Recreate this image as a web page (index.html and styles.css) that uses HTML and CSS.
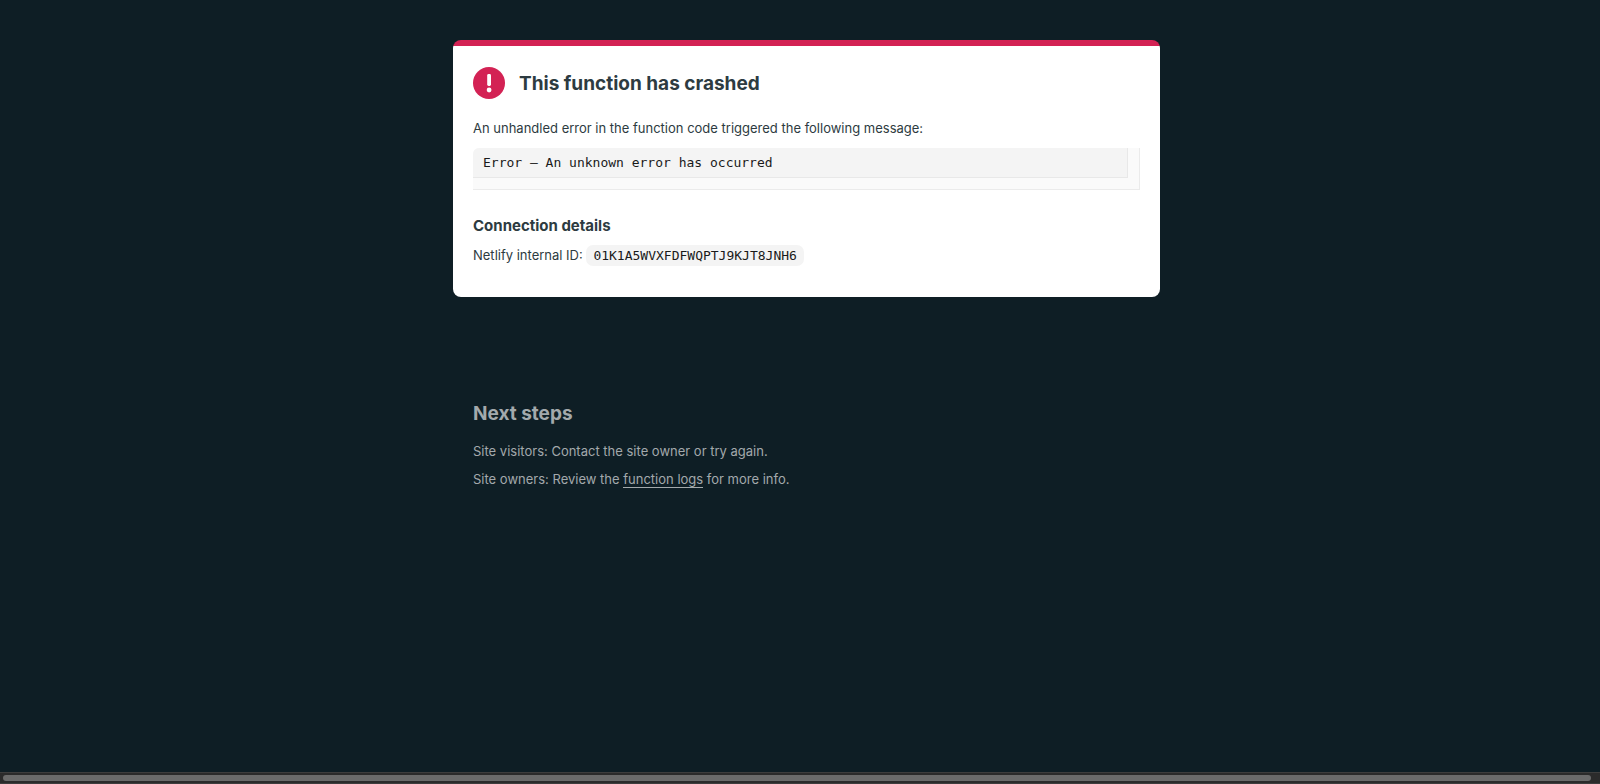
FILE: index.html
```html
<!DOCTYPE html>
<html lang="en">
<head>
    <meta charset="UTF-8">
    <meta name="viewport" content="width=device-width, initial-scale=1.0">
    <title>This function has crashed</title>
    <link rel="stylesheet" href="styles.css">
</head>
<body>

<div class="viewport">
    <main class="main">
        <section class="card">
            <div class="card-header">
                <svg class="error-icon" width="32" height="32" viewBox="0 0 32 32" aria-hidden="true">
                    <circle cx="16" cy="16" r="16" fill="#d32254"/>
                    <rect x="14.2" y="7" width="3.8" height="12" rx="1.4" fill="#fff"/>
                    <circle cx="16.1" cy="23" r="2.4" fill="#fff"/>
                </svg>
                <h1>This function has crashed</h1>
            </div>
            <p>An unhandled error in the function code triggered the following message:</p>
            <div class="error-message">
                <pre>Error – An unknown error has occurred</pre>
            </div>
            <h2>Connection details</h2>
            <p>Netlify internal ID: <code>01K1A5WVXFDFWQPTJ9KJT8JNH6</code></p>
        </section>

        <section class="next-steps">
            <h1>Next steps</h1>
            <p>Site visitors: Contact the site owner or try again.</p>
            <p>Site owners: Review the <a href="#">function logs</a> for more info.</p>
        </section>
    </main>
</div>

<div class="scrollbar">
    <div class="scrollbar-thumb"></div>
</div>

</body>
</html>
```
FILE: styles.css
```css
:root {
    --bg-color: #0e1e25;
    --text-color: #2d3b41;
    --muted-color: #a3a9ac;
    --error-color: #d32254;
}

* {
    box-sizing: border-box;
}

body {
    font-family: Inter, "Liberation Sans", sans-serif;
    font-size: 13px;
    line-height: 20px;
    background-color: var(--bg-color);
    color: var(--text-color);
    margin: 0;
    min-height: 100vh;
    display: flex;
    flex-direction: column;
    overflow: hidden;
}

h1 {
    font-size: 19px;
    line-height: 28px;
    margin: 0;
    padding-top: 2px;
}

h2 {
    font-size: 15px;
    line-height: 20px;
    margin: 26px 0 9px;
}

p {
    margin: 0 0 8px;
}

.viewport {
    flex: 1;
    overflow: hidden;
}

/* the content is slightly wider than the window */
.main {
    width: calc(100% + 13px);
    padding: 40px 20px;
    display: flex;
    flex-direction: column;
    align-items: center;
    gap: 101px;
}

.card {
    width: 100%;
    max-width: 707px;
    padding: 27px 20px 23px;
    background: linear-gradient(var(--error-color) 6px, white 6px);
    border-radius: 8px;
}

.card-header {
    display: flex;
    align-items: center;
    gap: 14px;
    margin-bottom: 19px;
}

.error-message {
    padding: 0 11px 11px 0;
    background-color: #fafafa;
    border-right: 1px solid #ebebeb;
    border-bottom: 1px solid #ebebeb;
    border-top-left-radius: 6px;
    margin-top: 10px;
}

pre,
code {
    font-family: "DejaVu Sans Mono", monospace;
    font-size: 13px;
    color: #1a1a1a;
    background-color: #f4f4f4;
}

pre {
    margin: 0;
    padding: 5px 10px 4px;
    border-right: 1px solid #e8e8e8;
    border-bottom: 1px solid #e8e8e8;
    border-top-left-radius: 6px;
}

code {
    padding: 3px 7px;
    border-radius: 7px;
}

.next-steps {
    width: 100%;
    max-width: 667px;
    color: var(--muted-color);
}

.next-steps h1 {
    margin-bottom: 13px;
}

.next-steps a {
    color: inherit;
    text-decoration: none;
    border-bottom: 1px solid;
}

.scrollbar {
    height: 12px;
    padding: 2px 9px 2px 3px;
    background-color: #2b2b2b;
    border-top: 1px solid #3d3d3d;
    border-bottom: 1px solid #3d3d3d;
}

.scrollbar-thumb {
    height: 6px;
    background-color: #6b6b6b;
    border-radius: 3px;
}
```
